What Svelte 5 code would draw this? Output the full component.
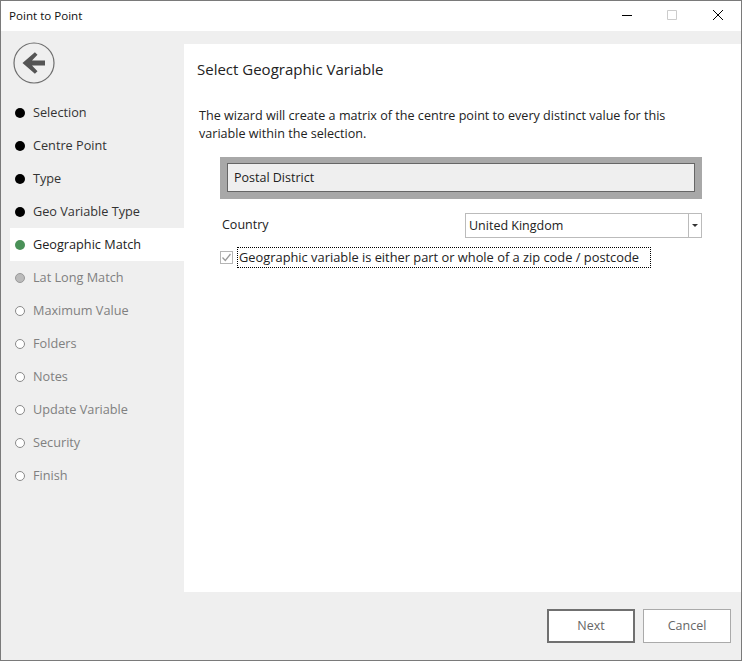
<script lang="ts">
	type Step = { label: string; state: 'done' | 'current' | 'next' | 'todo' };

	const steps: Step[] = [
		{ label: 'Selection', state: 'done' },
		{ label: 'Centre Point', state: 'done' },
		{ label: 'Type', state: 'done' },
		{ label: 'Geo Variable Type', state: 'done' },
		{ label: 'Geographic Match', state: 'current' },
		{ label: 'Lat Long Match', state: 'next' },
		{ label: 'Maximum Value', state: 'todo' },
		{ label: 'Folders', state: 'todo' },
		{ label: 'Notes', state: 'todo' },
		{ label: 'Update Variable', state: 'todo' },
		{ label: 'Security', state: 'todo' },
		{ label: 'Finish', state: 'todo' }
	];
</script>

<div class="window">
	<header class="titlebar">
		<span class="title">Point to Point</span>
		<div class="controls">
			<svg width="14" height="14" viewBox="0 0 14 14"><path d="M1 6.500h10" stroke="#000" fill="none" /></svg>
			<svg width="14" height="14" viewBox="0 0 14 14"><path d="M1.500 1.500h9v9h-9z" stroke="#ccc" fill="none" /></svg>
			<svg width="14" height="14" viewBox="0 0 14 14"><path d="M2 1l10 10M12 1L2 11" stroke="#000" fill="none" /></svg>
		</div>
	</header>

	<div class="body">
		<aside class="sidebar">
			<button class="back" aria-label="Back">
				<svg width="42" height="42" viewBox="0 0 42 42">
					<circle cx="21" cy="21" r="20" fill="none" stroke="#6e6e6e" stroke-width="1.2" />
					<path d="M32 18.500h-13l5.500-5.700-2.600-2.500L9.500 21l12.400 10.700 2.600-2.500-5.500-5.700h13z" fill="#555" />
				</svg>
			</button>
			<ul class="steps">
				{#each steps as step}
					<li class={step.state}>
						<span class="dot"></span>
						{step.label}
					</li>
				{/each}
			</ul>
		</aside>

		<main class="panel">
			<h1>Select Geographic Variable</h1>
			<p>The wizard will create a matrix of the centre point to every distinct value for this variable within the selection.</p>

			<div class="form">
				<div class="variable">
					<div class="variable-inner">Postal District</div>
				</div>
				<div class="country">
					<span class="country-label">Country</span>
					<div class="select">
						<span class="value">United Kingdom</span>
						<span class="arrow"></span>
					</div>
				</div>
				<div class="check">
					<span class="box">
						<svg width="11" height="11" viewBox="0 0 11 11"><path d="M1.500 5.500l2.800 3L9.500 2" stroke="#9a9a9a" stroke-width="1.300" fill="none" /></svg>
					</span>
					<span class="check-label">Geographic variable is either part or whole of a zip code / postcode</span>
				</div>
			</div>
		</main>
	</div>

	<footer class="footer">
		<button class="btn primary">Next</button>
		<button class="btn">Cancel</button>
	</footer>
</div>

<style>
	:global(body) {
		margin: 0;
		background: #fff;
	}
	.window {
		box-sizing: border-box;
		width: 742px;
		height: 661px;
		display: flex;
		flex-direction: column;
		border: 1px solid #7a7a7a;
		background: #efefef;
		font-family: 'Open Sans', 'Noto Sans', sans-serif;
		font-size: 12.500px;
		color: #222;
	}
	.titlebar {
		height: 30px;
		flex: none;
		background: #fff;
		display: flex;
		align-items: center;
		justify-content: space-between;
		padding-left: 8px;
	}
	.title {
		font-size: 11.600px;
		color: #111;
		margin-top: -1px;
	}
	.controls {
		display: flex;
		gap: 31px;
		padding-right: 16px;
	}
	.body {
		flex: 1;
		display: flex;
		padding-top: 13px;
		min-height: 0;
	}
	.sidebar {
		width: 183px;
		flex: none;
	}
	.back {
		display: block;
		border: 0;
		background: none;
		padding: 0;
		margin: -2px 0 0 12px;
		height: 42px;
	}
	.steps {
		list-style: none;
		margin: 12px 0 0 9px;
		padding: 0;
	}
	.steps li {
		box-sizing: border-box;
		height: 33px;
		display: flex;
		align-items: center;
		gap: 8px;
		padding: 0 0 2px 5px;
		font-size: 12.700px;
		color: #333;
	}
	.steps li.current {
		background: #fff;
		color: #222;
	}
	.steps li.next,
	.steps li.todo {
		color: #808080;
	}
	.dot {
		box-sizing: border-box;
		width: 10px;
		height: 10px;
		margin-top: 2px;
		border-radius: 50%;
		background: #000;
	}
	.current .dot {
		background: #4a9158;
	}
	.next .dot {
		background: #bbb;
		border: 1px solid #999;
	}
	.todo .dot {
		background: #fff;
		border: 1px solid #8a8a8a;
	}
	.panel {
		flex: 1;
		background: #fff;
		padding: 15px 13px 0;
	}
	h1 {
		margin: 0;
		font-size: 15px;
		font-weight: 400;
		line-height: 20px;
		color: #222;
	}
	p {
		margin: 28px 0 0 2px;
		width: 490px;
		font-size: 12.600px;
		line-height: 18px;
		color: #222;
	}
	.form {
		margin: 14px 26px 0 23px;
	}
	.variable {
		background: #a8a8a8;
		padding: 6px 7px 7px;
	}
	.variable-inner {
		box-sizing: border-box;
		height: 29px;
		border: 1px solid #666;
		background: #efefef;
		padding-left: 6px;
		line-height: 27px;
	}
	.country {
		display: flex;
		align-items: center;
		justify-content: space-between;
		height: 25px;
		margin-top: 14px;
		padding-left: 2px;
	}
	.country-label {
		margin-top: -3px;
	}
	.select {
		box-sizing: border-box;
		width: 237px;
		height: 25px;
		display: flex;
		align-items: center;
		justify-content: space-between;
		border: 1px solid #bbb;
		padding-left: 3px;
	}
	.arrow {
		position: relative;
		width: 12px;
		height: 100%;
		border-left: 1px solid #bbb;
	}
	.arrow::after {
		content: '';
		position: absolute;
		left: 3px;
		top: 10px;
		border: 3px solid transparent;
		border-top: 3px solid #333;
		border-bottom: 0;
	}
	.check {
		display: flex;
		align-items: center;
		margin-top: 9px;
		height: 21px;
	}
	.box {
		box-sizing: border-box;
		width: 13px;
		height: 13px;
		display: flex;
		align-items: center;
		justify-content: center;
		border: 1px solid #b5b5b5;
		margin-right: 4px;
	}
	.check-label {
		box-sizing: border-box;
		height: 21px;
		border: 1px dotted #000;
		padding: 0 11px 0 1px;
		font-size: 12.850px;
		line-height: 19px;
	}
	.footer {
		height: 68px;
		flex: none;
		display: flex;
		justify-content: flex-end;
		align-items: flex-start;
		gap: 8px;
		padding: 17px 10px 0 0;
		box-sizing: border-box;
	}
	.btn {
		box-sizing: border-box;
		width: 88px;
		height: 34px;
		background: #fff;
		border: 1px solid #aaa;
		font: inherit;
		color: #666;
		padding: 0 0 2px;
	}
	.btn.primary {
		border: 2px solid #707070;
	}
</style>
